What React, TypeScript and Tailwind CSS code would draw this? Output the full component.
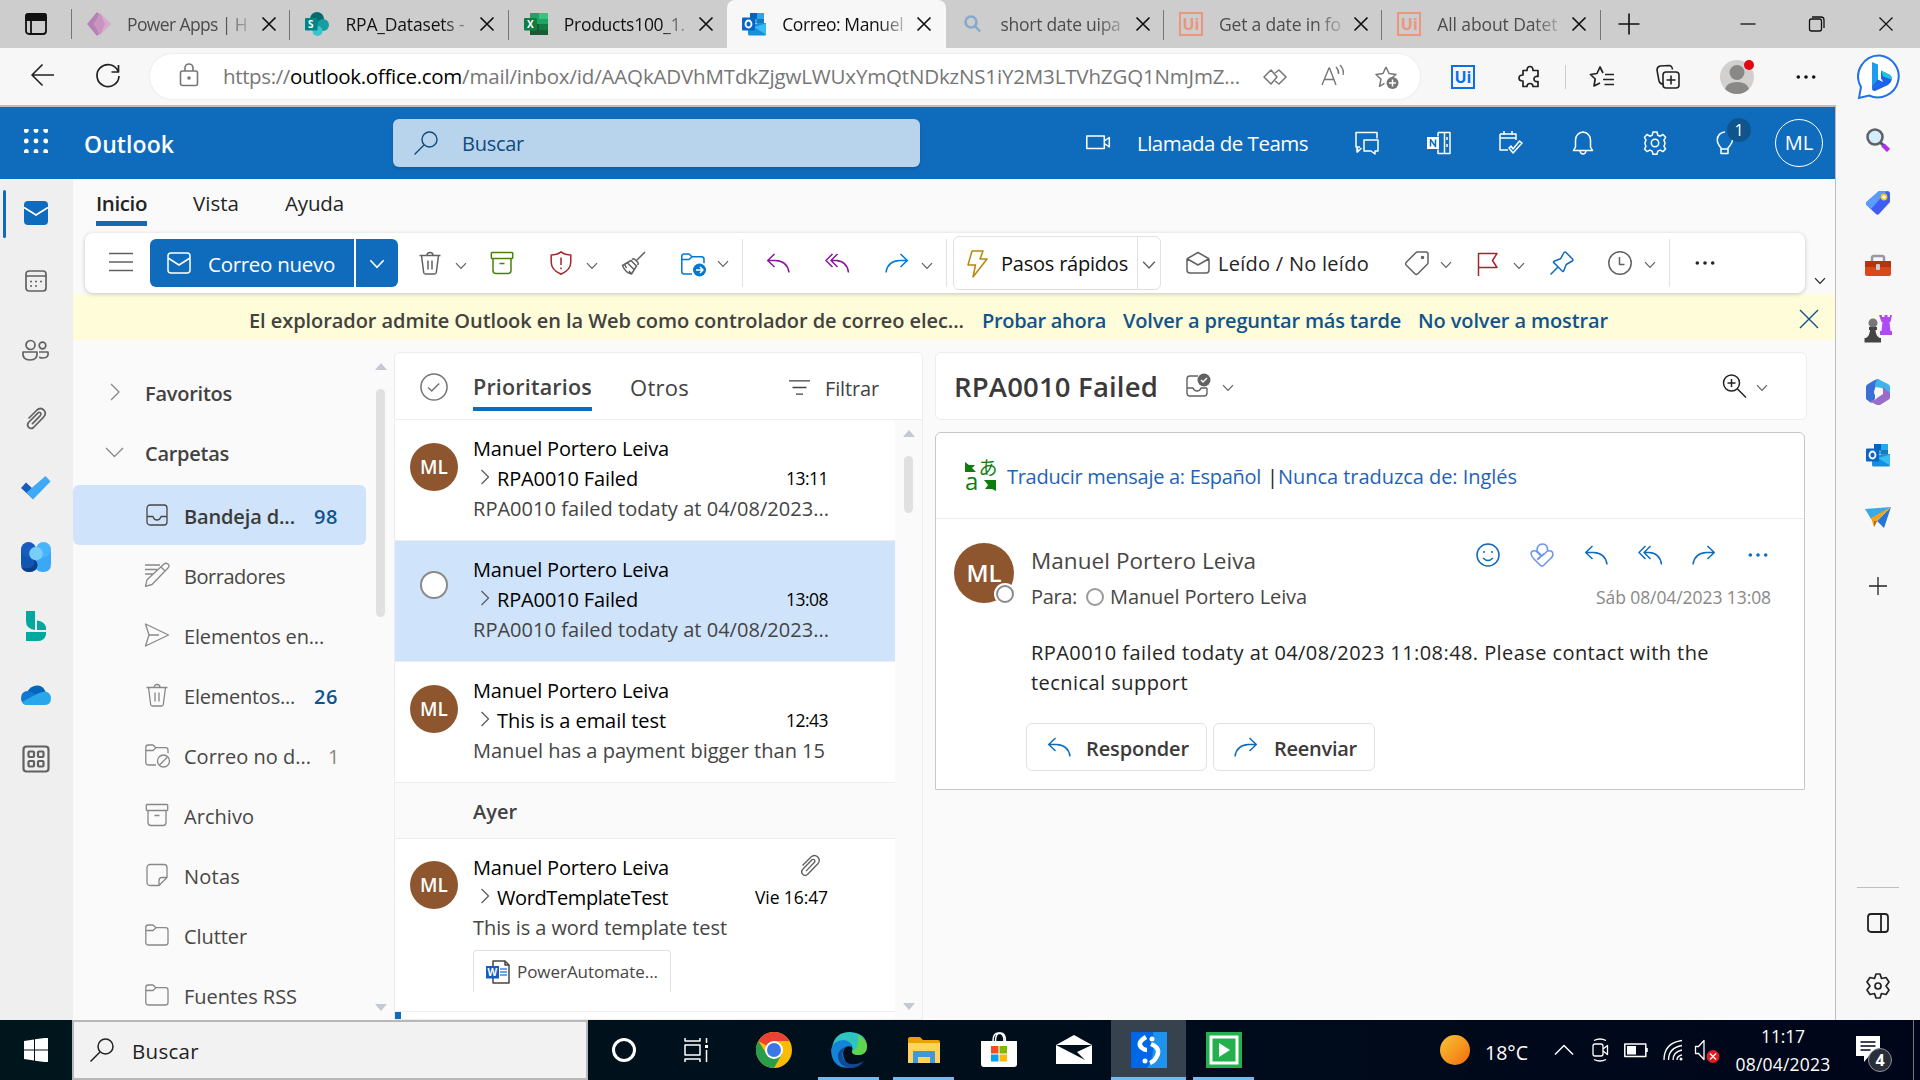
import { useLayoutEffect, useRef, useState, type ReactNode } from "react";

/** Text run whose letter spacing is fitted so that it spans `w` pixels. */
function T({ w, c = "", children }: { w: number; c?: string; children: string }) {
  const ref = useRef<HTMLSpanElement>(null);
  const [ls, setLs] = useState(0);
  useLayoutEffect(() => {
    const el = ref.current;
    if (!el) return;
    const natural = el.getBoundingClientRect().width - ls * children.length;
    setLs((w - natural) / children.length);
  }, [w, children]);
  return (
    <span ref={ref} className={"inline-block shrink-0 whitespace-pre " + c} style={{ letterSpacing: `${ls}px` }}>
      {children}
    </span>
  );
}

function I({ d, c = "", size = "size-6", sw = 1.5, children }: { d?: string; c?: string; size?: string; sw?: number; children?: ReactNode }) {
  return (
    <svg viewBox="0 0 24 24" className={"shrink-0 overflow-visible " + size + " " + c} fill="none" stroke="currentColor" strokeWidth={sw} strokeLinejoin="round">
      {d && <path d={d} />}
      {children}
    </svg>
  );
}

const P = {
  close: "M5.500 5.500l13 13M18.500 5.500l-13 13",
  search: "M15.500 1a7.500 7.500 0 1 1 0 15a7.500 7.500 0 1 1 0-15M10 14l-9.500 9.500",
  trash: "M1.500 4.500h21M9 4.500a3 3 0 0 1 6 0M3.500 4.500l2.200 17q.2 1.500 1.700 1.500h9.200q1.500 0 1.700-1.500l2.200-17M10 9.500v9M14 9.500v9",
  archive: "M2 1.500h20a.7.7 0 0 1 .7.7v4.600a.7.7 0 0 1-.7.7h-20a.7.7 0 0 1-.7-.7v-4.600a.7.7 0 0 1 .7-.7zM3 7.500v12a3 3 0 0 0 3 3h12a3 3 0 0 0 3-3v-12M9.500 12.500h5",
  shield: "M12 .8q4 3.200 9.800 3.200v7q0 8-9.800 12.200q-9.800-4.200-9.800-12.200v-7q5.800 0 9.800-3.200zM12 6.500v7.500M12 16.500v1.800",
  broom: "M23 1l-9 9M9 9.500l5.500 5.500l-5 8q-6-1-9-8.500zM10 8.500q1.500-1.500 3 0l2.500 2.500q1.500 1.500 0 3M5.500 12l6.500 6.500M3 14l1.500 3M9.500 23l-2.500-3",
  reply: "M8.500 3l-6.800 6.500l6.800 6.500M1.700 9.500h7.800q12 .5 13.500 12",
  replyAll: "M12.500 3l-6.500 6.500l6.500 6.500M7.500 3l-6.500 6.500l6.500 6.500M6 9.500h5q11 .5 12.500 12",
  forward: "M15.500 3l6.800 6.500l-6.800 6.500M22.300 9.500h-7.800q-12 .5-13.500 12",
  folder: "M.8 4.500a2.500 2.500 0 0 1 2.500-2.500h4.700l3 2.700l-3 2.800h-7.200M11 4.700h9.500a2.500 2.500 0 0 1 2.500 2.500v12.300a2.500 2.500 0 0 1-2.500 2.500h-17.200a2.500 2.500 0 0 1-2.500-2.500v-15",
  mail: "M4 2h16a3 3 0 0 1 3 3v14a3 3 0 0 1-3 3h-16a3 3 0 0 1-3-3v-14a3 3 0 0 1 3-3zM1 7l11 7l11-7",
  openMail: "M12 1.500l10.500 6q.5.300.5 1v10.500a3 3 0 0 1-3 3h-16a3 3 0 0 1-3-3v-10.500q0-.7.500-1zM1.500 8l10.500 6l10.500-6",
  tag: "M12.500 1h8.500a2 2 0 0 1 2 2v8.500q0 1-.7 1.700l-9.500 9.500q-1.500 1.300-3 0l-8.500-8.500q-1.300-1.500 0-3l9.500-9.500q.7-.7 1.700-.7z",
  flag: "M2.500 24v-22.500h18.500l-4.500 7l4.500 7h-18.500",
  pin: "M14 1.500q1-1 2 0l6.500 6.500q1 1.200-.3 2l-6 3.500l-2.500 6.500q-.5 1-1.300.2l-8.600-8.600q-.8-.8.200-1.300l6.500-2.500zM8 16l-7.500 7.500",
  clip: "M4.500 11.500l8.500-8.500q3.500-3 6.800 0q3 3.300 0 6.800l-10.300 10.700q-2.500 2-4.800-.2q-2.200-2.300-.2-4.800l9.500-9.700q1.300-1 2.500 0q1 1.300 0 2.500l-8.500 8.800",
  gear: "M10 1h4l.8 3.200l2.400 1l2.800-1.700l2.600 2.800l-1.700 2.800l1 2.400v1.500l-1 2.200l1.700 2.800l-2.700 2.600l-2.700-1.500l-2.400 1l-.8 3.200h-4l-.8-3.200l-2.400-1l-2.800 1.500l-2.500-2.600l1.500-2.800l-1-2.200v-1.500l1-2.400l-1.500-2.800l2.500-2.800l2.800 1.700l2.400-1z",
};

const Chev = ({ c = "", size = "size-3" }: { c?: string; size?: string }) => (
  <svg viewBox="0 0 12 12" className={"shrink-0 " + size + " " + c} fill="none" stroke="currentColor" strokeWidth="1.200">
    <path d="M1 3.200l5 5.300l5-5.300" />
  </svg>
);
const Dots = ({ c = "" }: { c?: string }) => (
  <svg viewBox="0 0 24 24" className={"size-6 shrink-0 " + c} fill="currentColor">
    <circle cx="4.300" cy="12" r="1.800" /><circle cx="12" cy="12" r="1.800" /><circle cx="19.700" cy="12" r="1.800" />
  </svg>
);
const Sep = ({ c = "" }: { c?: string }) => <div className={"h-12 w-px shrink-0 bg-[#e1e1e1] " + c} />;

const OutlookLogo = () => (
  <svg viewBox="0 0 24 24" className="size-6 shrink-0">
    <path d="M8 1h14v10H8z" fill="#28a8ea" /><path d="M8 1h7v6H8z" fill="#0364b8" /><path d="M15 7h7v6h-7z" fill="#14447d" opacity=".5" />
    <path d="M6 12l18-1v11q0 1.500-1.500 1.500H7.500Q6 23.500 6 22z" fill="#1490df" /><path d="M24 11.500v11L12 15z" fill="#50d9ff" opacity=".6" />
    <path d="M0 6.500Q0 5.500 1 5.500h11q1 0 1 1v11q0 1-1 1H1q-1 0-1-1z" fill="#0a66c2" />
    <ellipse cx="6.500" cy="12" rx="3" ry="3.500" fill="none" stroke="#fff" strokeWidth="1.800" />
  </svg>
);
const UiLogo = ({ c }: { c: string }) => (
  <div className={"flex size-6 shrink-0 items-center justify-center border-2 text-[16px] leading-none font-bold " + c}>Ui</div>
);
const tabIcons: Record<string, ReactNode> = {
  power: (
    <svg viewBox="0 0 24 24" className="size-6 opacity-80">
      <path d="M10 0l6 6v12l-6 6l-10-12z" fill="#b06fae" /><path d="M13 1l11 11l-11 11l-6-11z" fill="#dc9fcd" /><path d="M13 1l5 11l-5 11l-6-11z" fill="#c987bd" />
    </svg>
  ),
  share: (
    <svg viewBox="0 0 24 24" className="size-6">
      <circle cx="12" cy="7" r="7" fill="#036c70" /><circle cx="18" cy="13" r="6" fill="#1a9ba1" /><circle cx="12.500" cy="19" r="5" fill="#37c6d0" />
      <rect y="6" width="12.500" height="12.500" rx="1" fill="#038387" /><text x="3" y="16" fontSize="10" fontWeight="700" fill="#fff">S</text>
    </svg>
  ),
  excel: (
    <svg viewBox="0 0 24 24" className="size-6">
      <path d="M6 1h18v22H6z" fill="#21a366" /><path d="M15 1h9v6h-9z" fill="#33c481" /><path d="M6 12h18v11H6z" fill="#185c37" /><path d="M15 12h9v6h-9z" fill="#107c41" />
      <rect y="6" width="13" height="12.500" rx="1" fill="#107c41" /><text x="3" y="16" fontSize="10" fontWeight="700" fill="#fff">X</text>
    </svg>
  ),
  outlook: <OutlookLogo />,
  find: <I d="M10 4.500a5.500 5.500 0 1 1 0 11a5.500 5.500 0 1 1 0-11M14 14l5 5.500" sw={2.6} c="text-[#84abcf]" />,
  ui: <UiLogo c="border-[#ec967d] text-[#ec967d]" />,
};

function Tab({ icon, label, w, active, dim, sep }: { icon: string; label: string; w: number; active?: boolean; dim?: boolean; sep?: boolean }) {
  return (
    <div className={"relative flex h-full w-[218.400px] shrink-0 items-center " + (active ? "rounded-t-lg bg-[#f7f7f7]" : "")}>
      <div className="ml-[15px] size-6">{tabIcons[icon]}</div>
      <div className={"ml-4 w-[124px] [mask-image:linear-gradient(to_right,black_78%,rgba(0,0,0,0.25)_98%)] " + (dim ? "text-[#4c4c4c]" : "text-[#111]")}>
        <T w={w} c="text-[17.500px]">{label}</T>
      </div>
      <I d={P.close} c="ml-1.5" sw={1.7} />
      {sep && <div className="absolute top-2.5 right-0 h-[30px] w-px bg-[#757575]" />}
    </div>
  );
}

const Avatar = ({ c = "size-12 text-[19px]" }: { c?: string }) => (
  <div className={"flex shrink-0 items-center justify-center rounded-full bg-[#8e562e] font-semibold text-white " + c}>ML</div>
);

function Mail({ subj, sw, prev, pw, time, tw, sel, clip, h = "h-[121px]", children }: {
  subj: string; sw: number; prev: string; pw: number; time: string; tw: number; sel?: boolean; clip?: boolean; h?: string; children?: ReactNode;
}) {
  return (
    <div className={"flex w-[500px] shrink-0 border-b border-[#ededed] " + h + (sel ? " bg-[#cfe3fa]" : " bg-white")}>
      <div className="flex w-[78px] justify-center">
        {sel ? <div className="mt-[30px] size-7 rounded-full border-2 border-[#8a8a8a] bg-white" /> : <Avatar c={"size-12 text-[19px] " + (clip ? "mt-[22px]" : "mt-[23px]")} />}
      </div>
      <div className="w-[356px] pt-[14px] text-[20px] leading-[30px]">
        <div className="flex h-[30px] items-center justify-between">
          <T w={196}>Manuel Portero Leiva</T>
          {clip && <I d={P.clip} c="mr-[7px] -mt-1 text-[#605e5c]" sw={1.3} />}
        </div>
        <div className="flex h-[30px] items-center">
          <I d="M8.500 5l7 7l-7 7" c="-mt-1 text-[#605e5c]" sw={1.300} />
          <T w={sw}>{subj}</T>
          <span className="-mt-0.5 mr-px ml-auto text-[17.500px]"><T w={tw}>{time}</T></span>
        </div>
        <div className="h-[30px] text-[#444]"><T w={pw}>{prev}</T></div>
        {children}
      </div>
    </div>
  );
}

function Folder({ d, label, w, n, nw = 24, sel, children }: { d?: string; label: string; w: number; n?: string; nw?: number; sel?: boolean; children?: ReactNode }) {
  return (
    <div className={"flex h-[60px] w-[293px] shrink-0 items-center pt-[3px] pl-[72px] pr-[28px] text-[20px] " + (sel ? "rounded-md bg-[#cfe3fa] font-semibold text-[#3b3a39]" : "text-[#484644]")}>
      <I d={d} c={"-mt-[3px] " + (sel ? "text-[#484644]" : "text-[#8a8886]")} sw={1.300}>{children}</I>
      <T w={w} c="ml-[15px]">{label}</T>
      {n && <T w={nw} c={"ml-auto " + (nw > 20 ? "font-semibold text-[#0f548c]" : "text-[#8a8886]")}>{n}</T>}
    </div>
  );
}

function Scroll({ thumb, c }: { thumb: string; c: string }) {
  return (
    <div className={"flex w-[27px] shrink-0 flex-col items-center pb-[9px] " + c}>
      <svg viewBox="0 0 12 7" className="h-[7px] w-3 shrink-0"><path d="M0 7l6-7l6 7z" fill="#c5cad0" /></svg>
      <div className={"w-[9px] rounded-full bg-[#e0e0e0] " + thumb} />
      <svg viewBox="0 0 12 7" className="mt-auto h-[7px] w-3 shrink-0"><path d="M0 0l6 7l6-7z" fill="#c5cad0" /></svg>
    </div>
  );
}

function TopChrome() {
  return (
    <>
      <div className="flex h-12 shrink-0 items-center bg-[#cdcdcd] text-[#111]">
        <div className="flex h-full w-[72px] shrink-0 items-center justify-center">
          <I sw={1.8} c="text-[#111]"><rect x="2" y="2" width="20" height="20" rx="3" /><path d="M2 3.500q0-1.500 2-1.500h16q2 0 2 1.500v4.500h-20z" fill="currentColor" /><path d="M7 8v14" /></I>
        </div>
        <div className="-ml-px h-[30px] w-px bg-[#757575]" />
        <Tab icon="power" label="Power Apps | H" w={120} dim sep />
        <Tab icon="share" label="RPA_Datasets -" w={119} sep />
        <Tab icon="excel" label="Products100_1." w={121} />
        <Tab icon="outlook" label="Correo: Manuel" w={121} active />
        <Tab icon="find" label="short date uipa" w={120} dim sep />
        <Tab icon="ui" label="Get a date in fo" w={122} dim sep />
        <Tab icon="ui" label="All about Datet" w={120} dim sep />
        <I d="M12 1.500v21M1.500 12h21" c="ml-4" sw={1.6} />
        <I d="M4.500 12h15" c="ml-[95px]" sw={1.3} />
        <I c="ml-[45px]" sw={1.3}><rect x="4.500" y="7" width="12" height="12" rx="2" /><path d="M7 5h9q3 0 3 3v8" /></I>
        <I d={P.close} c="ml-[45px]" sw={1.2} />
      </div>
      <div className="flex h-[57px] shrink-0 items-center bg-[#f7f7f7] text-[#222]">
        <I d="M12.500 1.500l-10.500 10.500l10.500 10.500M2 12h22" c="ml-[30px] -mt-1" sw={1.6} />
        <I d="M22 7a11 11 0 1 0 1 5M22.500 1v7h-7" c="ml-[42px] -mt-0.5" sw={1.7} />
        <div className="ml-[30px] flex h-[45px] w-[1270px] items-center rounded-full bg-white text-[#767676] shadow-[0_0_3px_rgba(0,0,0,0.08)]">
          <I c="ml-[27px] -mt-1" sw={1.6}><rect x="3.500" y="8" width="17" height="14.500" rx="2" /><path d="M8 8v-3a4 4 0 0 1 8 0v3" /><circle cx="12" cy="15" r="1" fill="currentColor" /></I>
          <span className="ml-[22px] text-[20.500px]">
            <T w={67}>https://</T><T w={172} c="text-black">outlook.office.com</T><T w={778}>/mail/inbox/id/AAQkADVhMTdkZjgwLWUxYmQtNDkzNS1iY2M3LTVhZGQ1NmJmZ...</T>
          </span>
          <I d="M8 5l-7 7l7 7l6-7zM12 8l4-3l7 7l-7 7l-4-3" c="ml-[23px]" sw={1.5} />
          <I d="M2 20l7-17h.5l6.500 17M4.500 14.500h9M16 2q3 3 2.500 7M20 0q4.500 5 3 10" c="ml-[33px]" sw={1.4} />
          <I d="M12 2l3 6.500l7 1l-5 4M12 2l-3 6.500l-7 1l5 4.800l-1.500 7l5-3" c="ml-[30px]" sw={1.5}><circle cx="18.500" cy="18" r="6" fill="#767676" stroke="none" /><path d="M18.500 14.500v7M15 18h7" stroke="#fff" /></I>
        </div>
        <UiLogo c="ml-[31px] border-[#0a6ef0] text-[#0a6ef0]" />
        <I d="M5 5.500h4q0-4 3-4t3 4h5v6q-4-.5-4 2.500t4 2.500v5h-5q0-3-3-3t-3 3h-4v-5.500q-4 0-4-3t4-3z" c="ml-[43px]" sw={1.7} />
        <div className="ml-[23px] h-6 w-px bg-[#ccc]" />
        <I d="M13 8l-3-6l-3 6.500l-6.500 1l4.700 4.500l-1.200 7l6-3M15 9.500h9M13 14.500h11M14.500 19.500h9.500" c="ml-[24px]" sw={1.7} />
        <I d="M8 19q-4 .5-5-3l-2-11q0-3 3-4l9-.5q3 0 3.500 4M10 7h10q3 0 3 3v10q0 3-3 3h-10q-3 0-3-3v-10q0-3 3-3zM15 10.500v9M10.500 15h9" c="ml-[42px]" sw={1.6} />
        <div className="relative ml-[40px] size-[34px] rounded-full bg-[#d2d0ce]">
          <svg viewBox="0 0 34 34" className="size-[34px]"><circle cx="17" cy="12.500" r="7.500" fill="#8a8886" /><path d="M5 29q2-7 12-7t12 7q-5 5-12 5t-12-5z" fill="#8a8886" /></svg>
          <div className="absolute top-0 right-0 size-2.5 rounded-full bg-[#e30613]" />
        </div>
        <Dots c="ml-[40px] text-[#111]" />
        <svg viewBox="0 0 46 46" className="ml-[39px] size-[46px]">
          <path d="M23 1.500a21 21 0 1 1-11 40l-10 2.500l2-11a21 21 0 0 1 19-31.500z" fill="#fff" stroke="#2470e8" strokeWidth="2" />
          <path d="M15 8l6 2.500v18l-6 6.500z" fill="#1b9df0" /><path d="M15 34.500l11-6.500l-5-2.500l-6 7z" fill="#1d63e8" /><path d="M24 16.500l9 4.500q3 2 1 7l-3 3l-13 6q-3 0-3-2.500l11-7l-2-3z" fill="#1d63e8" /><path d="M24 16.500l9 4.500q2 1.500 1.500 4.500l-8.500-3z" fill="#1bc7d8" />
        </svg>
      </div>
    </>
  );
}

function BlueHeader() {
  return (
    <div className="flex h-[72px] shrink-0 items-center bg-[#0f6cbd] text-white">
      <svg viewBox="0 0 24 24" className="ml-6 -mt-1 size-6" fill="#fff">
        {[1.5, 12, 22.5].map((y) => [2.300, 12, 21.700].map((x) => <circle key={x + "-" + y} cx={x} cy={y} r="2.400" />))}
      </svg>
      <T w={90} c="ml-[36px] mt-0.5 text-[23px] font-semibold">Outlook</T>
      <div className="ml-[219px] flex h-12 w-[527px] items-center rounded-md bg-[#b8d3ec] text-[#0f4a7d] shadow-[0_2px_3px_rgba(0,0,0,0.15)]">
        <I d={P.search} c="ml-[21px]" sw={1.400} />
        <T w={62} c="ml-[24px] mt-0.5 text-[20px]">Buscar</T>
      </div>
      <I d="M.8 6h17.500v12.500h-17.500zM18.300 11l5-3.500v9.500l-5-3.500" c="ml-[166px] -mt-0.5" />
      <T w={171} c="ml-[27px] text-[20.500px]">Llamada de Teams</T>
      <I d="M5 16h-3v5v-5h-1v-14.500h21v6M9 9h14v11h-3v3l-4-3h-7zM2.500 16v5l4-4" c="ml-[47px]" />
      <I d="M11 1.500h12v21h-12v-4M11 1.500v4M17.500 1.500v21M20 6v3M20 13v3" c="ml-[48px]"><rect x="0" y="6" width="12" height="12" fill="#fff" stroke="none" /><path d="M3.500 15.500v-7l5 7v-7" stroke="#0f6cbd" /></I>
      <I d="M1 3h16v6M1 3v16h8M1 7h16M5 0v4M13 0v4M10 17l4 5l9-10l-2.500-2l-6.500 8l-2-3z" c="ml-[48px]" />
      <I d="M12 1a8 8 0 0 0-7.500 8v7l-2 3.500h19l-2-3.500v-7a8 8 0 0 0-7.500-8zM9 20q.5 3 3 3t3-3" c="ml-[48px]" />
      <I d={P.gear} c="ml-[48px]"><circle cx="12" cy="12" r="3.700" /></I>
      <div className="relative ml-[50px]">
        <I d="M12 1a7.700 7.700 0 0 0-7.700 8q0 3.500 3.700 8v5.500h7v-5.500q4-4.500 4.500-8M8 18h7" c="-ml-1" />
        <div className="absolute -top-[13px] left-[10px] flex size-6 items-center justify-center rounded-full bg-[#0f548c] text-[16px]">1</div>
      </div>
      <div className="ml-[38px] flex size-12 items-center justify-center rounded-full border border-white text-[20px]">ML</div>
    </div>
  );
}

function Ribbon() {
  return (
    <div className="flex h-[115px] shrink-0 flex-col">
      <div className="flex h-[54px] items-start pt-[9px] text-[20.500px] leading-[30px] text-[#242424]">
        <div className="ml-[23px] h-[38px] border-b-[5px] border-[#0f6cbd]"><T w={51} c="font-semibold">Inicio</T></div>
        <T w={46} c="ml-[46px]">Vista</T>
        <T w={59} c="ml-[46px]">Ayuda</T>
      </div>
      <div className="flex items-end">
        <div className="z-10 ml-3 flex h-[60px] w-[1720px] shrink-0 items-center rounded-lg bg-white text-[#616161] shadow-[0_1px_4px_rgba(0,0,0,0.22)]">
          <I d="M0 3.500h24M0 12h24M0 20.500h24" c="ml-6 -mt-0.5" />
          <div className="ml-[17px] flex h-12 w-[204px] items-center rounded-l-md bg-[#0f6cbd] text-white">
            <I d={P.mail} c="ml-[17px]" />
            <T w={127} c="ml-[17px] mt-0.5 text-[20.500px]">Correo nuevo</T>
          </div>
          <div className="ml-[2px] flex h-12 w-[42px] items-center justify-center rounded-r-md bg-[#0f6cbd] pt-0.5 text-white"><Chev size="size-4" /></div>
          <I d={P.trash} c="ml-5" /><Chev c="ml-[13px] mt-1.5" />
          <I d={P.archive} c="ml-[23px] text-[#498205]" />
          <I d={P.shield} c="ml-[35px] text-[#a4262c]" /><Chev c="ml-[13px] mt-1.5" />
          <I d={P.broom} c="ml-6" />
          <I c="ml-[35px] mt-0.5 text-[#0078d4]" d="M.8 4.500a2.500 2.500 0 0 1 2.500-2.500h4.700l3 2.700l-3 2.800h-7.200M11 4.700h9.500a2.500 2.500 0 0 1 2.500 2.500v4M11 22h-7.700a2.500 2.500 0 0 1-2.500-2.500v-15"><circle cx="18.500" cy="18" r="6.500" fill="#0078d4" stroke="none" /><path d="M15 18h7M19 15l3 3l-3 3" stroke="#fff" /></I>
          <Chev c="ml-3 mt-0.5" />
          <Sep c="ml-[13px]" />
          <I d={P.reply} c="ml-[23px] text-[#881798]" /><I d={P.replyAll} c="ml-[35px] text-[#881798]" /><I d={P.forward} c="ml-9 text-[#0078d4]" /><Chev c="ml-3 mt-1.5" />
          <Sep c="ml-[13px]" />
          <div className="ml-1.5 flex h-[54px] w-[208px] items-center rounded-md border border-[#e1e1e1]">
            <I d="M7 0h11l-3 8h7l-14 18l2.500-12h-7.500z" c="ml-[11px] text-[#b8860b]" />
            <T w={127} c="ml-3 mt-0.5 text-[20px] text-[#111]">Pasos rápidos</T>
            <div className="ml-[9px] flex h-[52px] flex-1 items-center justify-center border-l border-[#e1e1e1] pt-1"><Chev size="size-3.5" /></div>
          </div>
          <I d={P.openMail} c="ml-[25px]" />
          <T w={151} c="ml-2 mt-0.5 text-[20px] text-[#242424]">Leído / No leído</T>
          <I d={P.tag} c="ml-[36px]"><circle cx="17.500" cy="6.500" r="1" fill="currentColor" /></I><Chev c="ml-[11px] mt-1" />
          <I d={P.flag} c="ml-6 mt-0.5 text-[#a4262c]" /><Chev c="ml-[13px] mt-1.5" />
          <I d={P.pin} c="ml-[25px] text-[#0f6cbd]" />
          <I d="M11.500 6v7.500h5" c="ml-[34px]"><circle cx="12" cy="12" r="11.200" /></I><Chev c="ml-[12px] mt-1" />
          <Sep c="ml-[13px]" />
          <Dots c="ml-[23px] text-[#242424]" />
        </div>
        <Chev c="mb-[6px] ml-[9px] text-[#242424]" />
      </div>
    </div>
  );
}

function Reading() {
  return (
    <div className="ml-3 mt-3 flex w-[872px] shrink-0 flex-col">
      <div className="flex h-[68px] items-center rounded-md border border-[#ededed] bg-white text-[#616161]">
        <T w={204} c="ml-[18px] mt-0.5 text-[27.500px] font-semibold text-[#3b3a39]">RPA0010 Failed</T>
        <I d="M12 2h-8q-3 0-3 3v14q0 3 3 3h14q3 0 3-3v-5M1 14h6q1 3 4 3t4-3h6" c="ml-7" sw={1.400}><circle cx="18" cy="6" r="6.500" fill="#616161" stroke="none" /><path d="M15 6l2 2l4-4" stroke="#fff" /></I>
        <Chev c="ml-3 mt-1" />
        <I c="ml-[489px] text-[#242424]" d="M8.500 1a8 8 0 1 1 0 16a8 8 0 1 1 0-16M14.500 15l8.500 8.500M8.500 5v8M4.500 9h8" /><Chev c="ml-[9px] mt-1" />
      </div>
      <div className="mt-3 h-[358px] w-[870px] rounded-t-md border border-[#c8c8c8] bg-white">
        <div className="flex h-[86px] items-center border-b border-[#ededed] text-[20px] text-[#1f63b5]">
          <svg viewBox="0 0 32 32" className="ml-[29px] size-8 overflow-visible text-[#107c10]" fill="currentColor">
            <path d="M0 2l4 3h6l-3 3l4 4h-11z" /><path d="M31 31l-4-2h-7l3-4l-4-5h12z" />
            <text x="13.500" y="15" fontSize="19" fontFamily="Noto Sans CJK JP, sans-serif">あ</text><text x="0" y="30" fontSize="24">a</text>
          </svg>
          <T w={254} c="ml-[10px] mt-0.5">Traducir mensaje a: Español</T>
          <T w={6} c="ml-[6px] mt-0.5 text-[#222]">|</T>
          <T w={239} c="ml-[5px] mt-0.5">Nunca traduzca de: Inglés</T>
        </div>
        <div className="flex pt-[24px] text-[20px]">
          <div className="relative ml-[18px] h-[60px]">
            <Avatar c="size-[60px] text-[24px]" />
            <div className="absolute right-0 bottom-0 size-[18px] rounded-full border-2 border-[#8a8a8a] bg-white ring-2 ring-white" />
          </div>
          <div className="ml-[17px] flex-1">
            <div className="flex h-[36px] items-center text-[#484644]">
              <T w={225} c="text-[22.500px]">Manuel Portero Leiva</T>
              <div className="-mt-3 ml-auto flex gap-[30px] pr-[34px] text-[#0f6cbd]">
                <I d="M7 15q5 5 10 0M8 8v2M16 8v2"><circle cx="12" cy="12" r="11" /></I>
                <I c="text-[#6b93f0]" d="M7 8q0-7 5.500-7t5 7q5-1 5.500 3q0 3-3 5l-6 6q-2 2-4 0l-6-6q-3-3-3-6q1-3 5-2l5 5l-4 3.500M7 8l5 5l5.500-5M8 16.500l6-6" />
                <I d={P.reply} /><I d={P.replyAll} /><I d={P.forward} /><Dots />
              </div>
            </div>
            <div className="flex h-9 items-center text-[#484644]">
              <T w={46}>Para:</T>
              <div className="ml-[9px] size-[18px] rounded-full border-2 border-[#9a9a9a]" />
              <T w={197} c="ml-1.5">Manuel Portero Leiva</T>
              <T w={175} c="mr-[33px] ml-auto text-[17.500px] text-[#8a8886]">Sáb 08/04/2023 13:08</T>
            </div>
            <div className="pt-[23px] leading-[30px] text-[#242424]">
              <div><T w={678}>RPA0010 failed todaty at 04/08/2023 11:08:48. Please contact with the</T></div>
              <div><T w={157}>tecnical support</T></div>
            </div>
            <div className="-ml-[5px] mt-[25px] flex gap-1.5 font-semibold text-[#3b3a39]">
              <div className="flex h-12 w-[181px] items-center rounded-md border border-[#e1e1e1]"><I d={P.reply} c="ml-5 text-[#0f6cbd]" /><T w={103} c="ml-[15px] mt-[3px]">Responder</T></div>
              <div className="flex h-12 w-[162px] items-center rounded-md border border-[#e1e1e1]"><I d={P.forward} c="ml-5 text-[#0f6cbd]" /><T w={83} c="ml-4 mt-[3px]">Reenviar</T></div>
            </div>
          </div>
        </div>
      </div>
    </div>
  );
}

function Rail() {
  const cell = "flex h-[69px] shrink-0 items-center justify-center";
  return (
    <div className="flex w-[73px] shrink-0 flex-col bg-[#efefef] pr-[2px] text-[#616161]">
      <div className="relative flex h-[67px] shrink-0 items-center justify-center">
        <svg viewBox="0 0 24 24" className="size-6"><rect y="0" width="24" height="24" rx="4" fill="#0f6cbd" /><path d="M0 6.500l12 7.500l12-7.500" stroke="#fff" strokeWidth="1.800" fill="none" /></svg>
        <div className="absolute top-[11px] left-[3px] h-12 w-[3px] rounded bg-[#0f6cbd]" />
      </div>
      <div className={cell}><I sw={1.700}><rect x="2" y="2" width="20" height="20" rx="3" /><path d="M2 7h20M6 12.500h2M11 12.500h2M16 12.500h2M6 17h2M11 17h2" /></I></div>
      <div className={cell}><I d="M-1 14h14q1 8-7 8t-7-8zM15 14h9q1 6-5 6q-2 0-4-.8" sw={1.700}><circle cx="6.500" cy="7" r="4.500" /><circle cx="18.500" cy="7.500" r="3.300" /></I></div>
      <div className={cell}><I d={P.clip} sw={1.700} /></div>
      <div className={cell}><svg viewBox="0 0 30 24" className="h-6 w-[30px]"><path d="M0 12l5-5.500l7 6.500v10z" fill="#185abd" /><path d="M5.500 16.500l19-16.500l5 5.500l-17.500 18z" fill="#3fa9f5" /></svg></div>
      <div className={cell}>
        <svg viewBox="0 0 30 30" className="size-[30px]">
          <rect x="0" y="0" width="15" height="20" rx="7.500" fill="#155bc0" /><rect x="15" y="0" width="15" height="20" rx="7.500" fill="#47b5fb" />
          <path d="M30 9v13q0 8-8 8t-8-7q0-6 6-7q8-1 10-7z" fill="#3aa8f5" />
          <path d="M0 9v13q0 8 8 8t8.500-7q0-6-6.500-7q-8-1-10-7z" fill="#0f56b3" /><path d="M1 26q3 4 7 4q8 0 8.500-7q0-3-3-5q1 10-12.500 8z" fill="#0b3f8c" />
          <circle cx="15" cy="11.500" r="6.800" fill="#79cdf9" />
        </svg>
      </div>
      <div className={cell}><svg viewBox="0 0 20 30" className="h-[30px] w-5" fill="#00a99d"><path d="M0 0h9v19q-9-1-9-9zM11 9.500q9 1 9.500 9.500h-9.500zM0 21h20.500q-1 9-9 9h-11.500z" /></svg></div>
      <div className={cell}><svg viewBox="0 0 30 20" className="h-5 w-[30px]"><path d="M6 7q4-7 11-6.500q5 .5 7.500 6l-9 7z" fill="#0364b8" /><path d="M0 13q0-6 6-7q4 0 8 3l10 8l-18 3q-6-1-6-7z" fill="#0f78d4" /><path d="M24 6.500q6 1 6 7t-6 6.500h-18q-4-.5-5-3l13-7q4-3 10-3.500z" fill="#28a8ea" /></svg></div>
      <div className="flex h-[60px] items-center justify-center"><svg viewBox="0 0 28 28" className="size-7" fill="none" stroke="currentColor" strokeWidth="2.200"><rect x="1.500" y="1.500" width="25" height="25" rx="3" /><rect x="6.500" y="6.500" width="5.500" height="5.500" rx="1" /><rect x="16" y="6.500" width="5.500" height="5.500" rx="1" /><rect x="6.500" y="16" width="5.500" height="5.500" rx="1" /><rect x="16" y="16" width="5.500" height="5.500" rx="1" /></svg></div>
    </div>
  );
}

function EdgeBar() {
  const cell = "flex h-[63px] shrink-0 items-center justify-center";
  return (
    <div className="flex w-[85px] shrink-0 flex-col border-l border-[#bdbdbd] bg-[#f7f7f7] pt-[3px] text-[#222]">
      <div className={cell}><svg viewBox="0 0 24 24" className="size-6"><circle cx="9" cy="9" r="7.500" fill="#d4ecfb" stroke="#5f6368" strokeWidth="2.600" /><path d="M14.500 14.500l7 7" stroke="#555" strokeWidth="3" /><path d="M17 17l5.500 5.500" stroke="#b030e8" strokeWidth="4.500" /></svg></div>
      <div className={cell}><svg viewBox="0 0 24 24" className="size-6"><path d="M13 0h8q3 0 3 3v8l-11 12q-1.500 1.500-3 0l-9.500-9q-1.500-1.500 0-3z" fill="#3f5df5" /><path d="M13 0h8L5 18l-4.500-4q-1.500-1.500 0-3z" fill="#5c9bfa" /><circle cx="18" cy="6" r="2.600" fill="#fff" stroke="#f2c811" strokeWidth="1.600" /></svg></div>
      <div className={cell}><svg viewBox="0 0 28 24" className="h-6 w-7"><path d="M8 8v-4q0-2 2-2h8q2 0 2 2v4" fill="none" stroke="#999" strokeWidth="2.500" /><rect x="1" y="7" width="26" height="15" rx="2" fill="#d8481a" /><path d="M1 7h26v6h-26z" fill="#b5330d" /><rect x="12" y="10" width="4" height="6" rx="1" fill="#ccc" /></svg></div>
      <div className={cell}><svg viewBox="0 0 28 28" className="size-7"><path d="M15 0h3v2h2.500v-2h3v2h2.500v-2h2l-1.500 7h-1l1 9h1.500v4h-12v-4h1.500l1-9h-1z" fill="#b04af5" /><circle cx="9" cy="8" r="4.500" fill="#777" /><path d="M5 12h8v3h-1.500q0 5 4 8h1.500v4.500h-16.500v-4.500h1.500q4-3 4-8h-1z" fill="#444" /></svg></div>
      <div className={cell}><svg viewBox="0 0 26 26" className="size-[26px]"><path d="M8 2q3-2 6-2l-4 9v11l-4 4l-5-4v-12q0-2 2-3z" fill="#3b6fd8" /><path d="M13 0l10 5q2 1 2 3v8l-8-7l-7-1q0-6 3-8z" fill="#3fb4ea" /><path d="M25 14v5q0 1-2 2l-8 5h-3l-8-4q6 0 8-3l6-4v-7z" fill="#9a6bc9" /><circle cx="13" cy="13" r="4" fill="#f7f7f7" /></svg></div>
      <div className={cell}><OutlookLogo /></div>
      <div className={cell}><svg viewBox="0 0 26 24" className="h-6 w-[26px]"><path d="M0 3l26-2l-14 11l-6 1z" fill="#39a9e8" /><path d="M26 1l-7 21l-7-7z" fill="#2178d8" /><path d="M26 1l-20 11l3 9l3-6z" fill="#f2a51a" /><path d="M12 15l-3 6v-6z" fill="#b8690a" /></svg></div>
      <div className="mt-[5px] flex h-[63px] items-center justify-center"><I d="M12 3v18M3 12h18" sw={1.300} /></div>
      <div className="mt-auto h-px w-[42px] self-center bg-[#bdbdbd]" />
      <div className="mt-[3px] flex h-[63px] items-center justify-center"><I sw={1.800}><rect x="2" y="3" width="20" height="18" rx="3" /><path d="M15 3v18" /></I></div>
      <div className="mb-[3px] flex h-[63px] items-center justify-center"><I sw={1.700} d="M10 0h4l1.500 4.500l4.500-1l3 4.500l-3 4l3 4l-3 4.500l-4.500-1l-1.500 4.500h-4l-1.500-4.500l-4.500 1l-3-4.500l3-4l-3-4l3-4.500l4.500 1z"><circle cx="12" cy="12" r="3" /></I></div>
    </div>
  );
}

function Taskbar() {
  const app = "flex h-full w-[75px] shrink-0 items-center justify-center";
  const line = " relative after:absolute after:bottom-0 after:left-[7px] after:h-[3px] after:w-[61px] after:bg-[#76b9ed]";
  return (
    <div className="flex h-[60px] shrink-0 items-center bg-linear-to-r from-[#00161d] to-[#00061a] text-white">
      <div className="flex w-[72px] shrink-0 justify-center"><svg viewBox="0 0 24 24" className="size-6" fill="#fff"><path d="M0 3l10-1.500v10h-10zM11 1.300l13-1.800v12h-13zM0 12.500h10v10l-10-1.500zM11 12.500h13v12l-13-1.800z" /></svg></div>
      <div className="flex h-full w-[516px] shrink-0 items-center border-2 border-[#b8b8b8] bg-[#f2f2f2] text-[#222]">
        <I d={P.search} c="ml-4" /><T w={67} c="ml-[18px] mt-[3px] text-[20.500px]">Buscar</T>
      </div>
      <div className="flex w-[72px] shrink-0 justify-center"><div className="size-6 rounded-full border-[3px] border-white" /></div>
      <div className="flex w-[72px] shrink-0 justify-center"><I d="M1 0v3h15v-3M1 24v-3h15v3M1 7h15v10h-15zM22.500 0v5M22.500 12v12"><rect x="21" y="7" width="3" height="3" fill="#fff" stroke="none" /></I></div>
      <div className="ml-1 flex h-full">
        <div className={app}><svg viewBox="0 0 36 36" className="size-9"><circle cx="18" cy="18" r="18" fill="#fbbc05" /><path d="M18 18L2.400 9A18 18 0 0 1 33.600 9H18z" fill="#ea4335" /><path d="M2.400 9A18 18 0 0 0 18 36l8-14l-16-1z" fill="#2a9d4a" /><circle cx="18" cy="18" r="9" fill="#fff" /><circle cx="18" cy="18" r="7" fill="#3b78e7" /></svg></div>
        <div className={app + line}>
          <svg viewBox="0 0 36 36" className="size-9"><path d="M1 15Q4 0 19 0q16 1 17 14q0 8-8 9q-8 0-7-4q1-2 0-5q-3-5-10-4q-7 1-10 5z" fill="#2fc4c0" /><path d="M27 3q9 4 9 12q-1 8-8 8q-6 0-7-3q8-4 6-17z" fill="#5fd64e" /><path d="M0 18Q2 8 13 8q7 1 8 7q-8-3-9 6q0 9 9 14.500Q1 38 0 18z" fill="#1583d8" /><path d="M14 15q-5 6-1 13q7 8 20 1q-6 8-15 7q-12-3-11-14q2-5 7-7z" fill="#114a94" /></svg>
        </div>
        <div className={app + line}><svg viewBox="0 0 34 28" className="h-7 w-[34px]"><path d="M1 3q0-2 2-2h10l3 3h15q2 0 2 2v20h-32z" fill="#e8a200" /><path d="M1 7h32v20h-32z" fill="#ffd35c" /><path d="M6 27v-11q0-1 1-1h20q1 0 1 1v11h-5v-6h-12v6z" fill="#3f97dc" /></svg></div>
        <div className={app}><svg viewBox="0 0 36 36" className="size-9"><path d="M12 9q0-8 5.500-8t5.500 8M14.500 9q0-8 5-8t5 8" fill="none" stroke="#fff" strokeWidth="1.500" /><path d="M0 9h36v23q0 3-3 3h-30q-3 0-3-3z" fill="#fff" /><path d="M10 14h7.500v7.500h-7.500z" fill="#f25022" /><path d="M18.500 14h7.500v7.500h-7.500z" fill="#7fba00" /><path d="M10 22.500h7.500v7h-7.500z" fill="#00a4ef" /><path d="M18.500 22.500h7.500v7h-7.500z" fill="#ffb900" /></svg></div>
        <div className={app}><svg viewBox="0 0 36 32" className="h-8 w-9"><path d="M0 11l18-10l18 10v19h-36z" fill="#fff" /><path d="M0 11h36l-15 7l8 8z" fill="#00101a" /></svg></div>
        <div className={app + " relative bg-[#36434f] after:absolute after:bottom-0 after:h-[3px] after:w-full after:bg-[#76b9ed]"}>
          <svg viewBox="0 0 36 36" className="size-9"><path d="M0 0h36v36h-36z" fill="#0067e6" /><path d="M22 0h14v36h-20q8-10 6-36z" fill="#1d93ee" /><path d="M15 5q-10 6-4 11q2 2 5 2M20 12q10 4 6 12q-2 5-7 7" fill="none" stroke="#fff" strokeWidth="4.500" /><circle cx="21" cy="7" r="2.500" fill="#fff" /><circle cx="14" cy="29" r="2.500" fill="#fff" /></svg>
        </div>
        <div className={app + line}><svg viewBox="0 0 36 36" className="size-9"><path d="M0 0h36v36h-36z" fill="#22b14c" /><path d="M5 5h26v26h-26z" fill="none" stroke="#fff" strokeWidth="3" /><path d="M13 11l11 7l-11 7z" fill="#fff" /></svg></div>
      </div>
      <div className="ml-[179px] size-[30px] rounded-full bg-linear-to-br from-[#f6c433] to-[#f26a0b]" />
      <T w={43} c="ml-[15px] mt-1.5 text-[19.500px]">18°C</T>
      <I d="M3 16.500l9-9l9 9" c="ml-6" />
      <I c="ml-3" sw={1.300}><rect x="5" y="6" width="10" height="12" rx="2" /><path d="M15 11l4.500-3.500v9l-4.500-3.500M6 2.500q6-3 12 0M6 21.500q6 3 12 0" /></I>
      <I c="ml-3" sw={1.500}><path d="M.8 6h21v12.500h-21zM23 10v4" /><rect x="3" y="8" width="9" height="8.500" fill="#fff" stroke="none" /></I>
      <I c="ml-[13px]" sw={1.300} d="M3 22q0-17 18-19.500M7.500 22q0-12 13.500-14.500M12 22q0-8 9-10M16 22q0-4 5-5"><circle cx="20" cy="21" r="1.500" fill="#fff" stroke="none" /></I>
      <I c="ml-[9px]" d="M1.500 8.500h3l5.500-6v19l-5.500-6h-3z" sw={1.300}><circle cx="19" cy="18.500" r="6.500" fill="#e01b24" stroke="none" /><path d="M16 15.500l6 6M22 15.500l-6 6" stroke="#fff" /></I>
      <div className="ml-[17px] flex w-[96px] flex-col items-center text-[17.500px] leading-[28px]"><T w={44}>11:17</T><T w={95}>08/04/2023</T></div>
      <div className="relative ml-[25px] h-7 w-6">
        <svg viewBox="0 0 24 28" className="h-7 w-6"><path d="M0 0h24v20h-11l-5 6v-6h-8z" fill="#fff" /><path d="M4.500 6h15M4.500 10h15M4.500 14h10" stroke="#00061a" strokeWidth="1.300" /></svg>
        <div className="absolute top-[12px] left-[12px] flex size-6 items-center justify-center rounded-full border border-[#8a8f98] bg-[#2a2e38] text-[16px] font-bold">4</div>
      </div>
      <div className="ml-auto mr-[6px] h-full w-px bg-[#777]" />
    </div>
  );
}

export default function App() {
  return (
    <div className="flex h-[1080px] w-[1920px] flex-col overflow-hidden bg-[#fafafa] font-['Open_Sans',sans-serif] text-black">
      <TopChrome />
      <div className="flex h-[915px] shrink-0">
        <div className="flex w-[1835px] shrink-0 flex-col border-t-2 border-[#bdbdbd]">
          <BlueHeader />
          <div className="flex h-[841px]">
            <Rail />
            <div className="flex w-[1762px] flex-col">
              <Ribbon />
              <div className="flex h-[46px] shrink-0 items-center bg-[#fffcd9] pt-2 text-[20px] font-semibold text-[#0f548c]">
                <T w={715} c="ml-[176px] text-[#424242]">El explorador admite Outlook en la Web como controlador de correo elec...</T>
                <T w={124} c="ml-[18px]">Probar ahora</T><T w={278} c="ml-[17px]">Volver a preguntar más tarde</T><T w={190} c="ml-[17px]">No volver a mostrar</T>
                <I d="M3 3l18 18M21 3l-18 18" c="-mt-1 ml-auto mr-[14px]" sw={1.400} />
              </div>
              <div className="flex h-[680px] overflow-hidden">
                <div className="flex w-[294px] shrink-0 flex-col pt-[24px] text-[20px]">
                  {[["Favoritos", 87, "M8 4l8 8l-8 8"], ["Carpetas", 84, "M3 8l8.500 8.500l8.500-8.500"]].map(([t, w, d]) => (
                    <div key={t as string} className="flex h-[60px] shrink-0 items-center font-semibold text-[#424242]">
                      <I d={d as string} c="-mt-1 ml-[30px] text-[#8a8886]" sw={1.300} /><T w={w as number} c="ml-[18px]">{t as string}</T>
                    </div>
                  ))}
                  <div className="mt-px" />
                  <Folder sel label="Bandeja d..." w={111} n="98" d="M5 2h14a3 3 0 0 1 3 3v14a3 3 0 0 1-3 3h-14a3 3 0 0 1-3-3v-14a3 3 0 0 1 3-3zM2 13.500h6q1 3.500 4 3.500t4-3.500h6" />
                  <Folder label="Borradores" w={101} d="M0 2h15M0 6.500h12M0 11h8M19 1q2-1.500 4 0t0 4l-16 16.500l-6.500 1.800l1.500-6.500zM16 4l4 4" />
                  <Folder label="Elementos en..." w={140} d="M.5 1l23 11l-23 11l3.500-11zM4 12h10" />
                  <Folder label="Elementos..." w={111} n="26" d={P.trash} />
                  <Folder label="Correo no d..." w={127} n="1" nw={10} d="M.8 4.500a2.500 2.500 0 0 1 2.500-2.500h4.700l3 2.700l-3 2.800h-7.200M11 4.700h9.500a2.500 2.500 0 0 1 2.500 2.500v3M11 22h-7.700a2.500 2.500 0 0 1-2.500-2.500v-15"><circle cx="18.500" cy="18" r="6" /><path d="M14.500 22l8-8" /></Folder>
                  <Folder label="Archivo" w={70} d={P.archive} />
                  <Folder label="Notas" w={56} d="M5 1.500h14a3 3 0 0 1 3 3v10l-8 8h-9a3 3 0 0 1-3-3v-15a3 3 0 0 1 3-3zM22 14.500h-5a3 3 0 0 0-3 3v5" />
                  <Folder label="Clutter" w={63} d={P.folder} />
                  <Folder label="Fuentes RSS" w={113} d={P.folder} />
                </div>
                <Scroll c="pt-[23px]" thumb="mt-[19px] h-[228px]" />
                <div className="mt-3 flex w-[529px] shrink-0 flex-col overflow-hidden rounded-t-md border border-[#ededed]">
                  <div className="flex h-[67px] shrink-0 items-center border-b border-[#ededed] bg-white text-[#424242]">
                    <I d="M7 12.500l3 3l6.500-6.500" size="size-7" c="ml-[25px] mt-0.5 text-[#757575]" sw={1.300}><circle cx="12" cy="12" r="11.200" /></I>
                    <div className="ml-[25px] mt-[7px] h-[43px] border-b-4 border-[#0f6cbd] pt-[3px] text-[21.500px]"><T w={119} c="font-semibold">Prioritarios</T></div>
                    <T w={59} c="ml-[38px] mt-0.5 text-[22px]">Otros</T>
                    <I d="M0 4.500h24M4 12h16M8 19.500h8" size="size-[21px]" c="ml-[100px] mt-0.5" />
                    <T w={54} c="ml-[15px] mt-1.5 text-[20px]">Filtrar</T>
                  </div>
                  <div className="flex flex-1 overflow-hidden">
                    <div className="flex w-[500px] flex-col">
                      <Mail subj="RPA0010 Failed" sw={141} prev="RPA0010 failed todaty at 04/08/2023..." pw={356} time="13:11" tw={42} />
                      <Mail sel subj="RPA0010 Failed" sw={141} prev="RPA0010 failed todaty at 04/08/2023..." pw={356} time="13:08" tw={42} />
                      <Mail subj="This is a email test" sw={169} prev="Manuel has a payment bigger than 15" pw={352} time="12:43" tw={42} />
                      <div className="flex h-[56px] shrink-0 items-center border-b border-[#ededed] pt-0.5 pl-[78px] text-[20px] font-semibold text-[#424242]"><T w={44}>Ayer</T></div>
                      <Mail h="h-[173px]" clip subj="WordTemplateTest" sw={171} prev="This is a word template test" pw={254} time="Vie 16:47" tw={73}>
                        <div className="mt-[7px] flex h-[42px] w-[198px] items-center rounded-t border border-b-0 border-[#e1e1e1] text-[#484644]">
                          <I c="ml-3" sw={1.500} d="M7 6v-5h12l4 4v18h-16v-5M19 1v4h4"><path d="M14 9h7M14 12h7M14 15h7" stroke="#3b8be0" /><rect y="6" width="13" height="12.500" fill="#185abd" stroke="none" /><text x="1.500" y="16" fontSize="10" fontWeight="700" fill="#fff" stroke="none">W</text></I>
                          <T w={141} c="ml-[7px] text-[17px]">PowerAutomate...</T>
                        </div>
                      </Mail>
                      <div className="flex-1 border-l-[6px] border-[#0f6cbd] bg-white" />
                    </div>
                    <Scroll c="pt-[10px]" thumb="mt-[19px] h-[57px]" />
                  </div>
                </div>
                <Reading />
              </div>
            </div>
          </div>
        </div>
        <EdgeBar />
      </div>
      <Taskbar />
    </div>
  );
}
